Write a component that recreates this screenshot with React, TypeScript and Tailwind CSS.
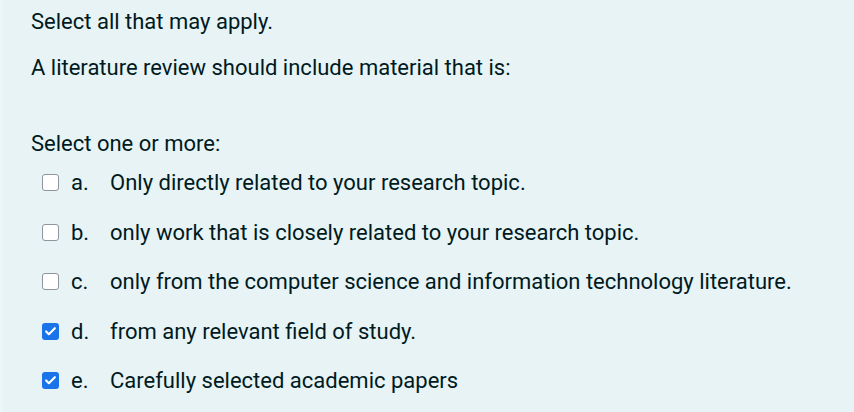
import { Check } from 'lucide-react'

const options = [
  { letter: 'a.', text: 'Only directly related to your research topic.', checked: false },
  { letter: 'b.', text: 'only work that is closely related to your research topic.', checked: false },
  { letter: 'c.', text: 'only from the computer science and information technology literature.', checked: false },
  { letter: 'd.', text: 'from any relevant field of study.', checked: true },
  { letter: 'e.', text: 'Carefully selected academic papers', checked: true },
]

export default function App() {
  return (
    <div
      className="w-[854px] h-[412px] overflow-hidden bg-[#e7f3f5] border-l-[3px] border-[#edf6f8] text-[#001a1e] text-[22px]"
      style={{ fontFamily: 'Roboto, "Liberation Sans", sans-serif' }}
    >
      <div className="pl-[28px] pt-[8px]">
        <p className="leading-[28px]">Select all that may apply.</p>
        <p className="leading-[28px] mt-[18px]">A literature review should include material that is:</p>

        <p className="leading-[28px] mt-[48px]">Select one or more:</p>
        <div className="flex flex-col">
          {options.map((o) => (
            <label key={o.letter} className="flex items-center h-[49.5px] pl-[11px]">
              {o.checked ? (
                <span className="w-[17px] h-[17px] rounded-[3px] bg-[#1a73e8] flex items-center justify-center">
                  <Check size={13} strokeWidth={4} className="text-white" />
                </span>
              ) : (
                <span className="w-[17px] h-[17px] rounded-[3px] bg-white border border-[#8f959e]" />
              )}
              <span className="ml-[12px] w-[39px]">{o.letter}</span>
              <span>{o.text}</span>
            </label>
          ))}
        </div>
      </div>
    </div>
  )
}
